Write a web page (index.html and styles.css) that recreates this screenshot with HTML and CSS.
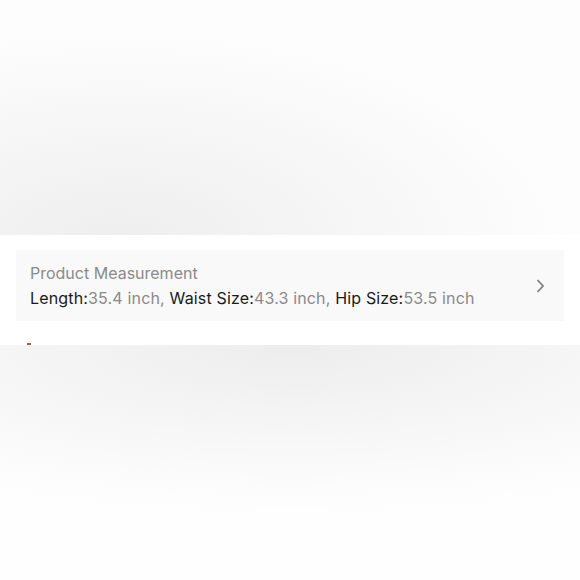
FILE: index.html
```html
<!DOCTYPE html>
<html lang="en">
<head>
    <meta charset="UTF-8">
    <meta name="viewport" content="width=device-width, initial-scale=1.0">
    <title>Product Measurement</title>
    <link rel="stylesheet" href="styles.css">
</head>
<body>
    <div class="shade-top"></div>

    <div class="section">
        <div class="measure-card">
            <div class="measure-text">
                <div class="measure-title">Product Measurement</div>
                <div class="measure-values">
                    <span class="label">Length:</span><span class="value">35.4 inch, </span><span class="label">Waist Size:</span><span class="value">43.3 inch, </span><span class="label">Hip Size:</span><span class="value">53.5 inch</span>
                </div>
            </div>
            <svg class="chevron" width="10" height="16" viewBox="0 0 10 16">
                <path d="M2.5 2 L8 8 L2.5 14" fill="none" stroke="#808080" stroke-width="1.8"/>
            </svg>
        </div>
        <div class="next-row"><span class="dot"></span></div>
    </div>

    <div class="shade-bottom"></div>
</body>
</html>
```

FILE: styles.css
```css
body {
    font-family: Inter, "Liberation Sans", Arial, sans-serif;
    margin: 0;
    padding: 0;
    background: #fff;
    width: 580px;
    height: 580px;
    overflow: hidden;
}

.shade-top {
    height: 235px;
    background: radial-gradient(ellipse 520px 250px at 120px 240px, #eeeeee 0%, #f6f6f6 45%, #fcfcfc 80%, #fdfdfd 100%);
}

.section {
    background: #fff;
    padding: 15px 16px 0;
    height: 110px;
    box-sizing: border-box;
}

.measure-card {
    display: flex;
    align-items: center;
    justify-content: space-between;
    background: #f9f9f9;
    height: 71px;
    padding: 0 19px 0 14px;
}

.measure-title {
    font-size: 16px;
    color: #8a8a8a;
    line-height: 24px;
}

.measure-values {
    font-size: 16px;
    line-height: 24px;
    margin-top: 1px;
    letter-spacing: 0.16px;
}

.label {
    color: #1a1a1a;
}

.value {
    color: #8a8a8a;
}

.chevron {
    display: block;
}

.next-row {
    height: 24px;
    position: relative;
}

.dot {
    position: absolute;
    left: 11px;
    top: 22px;
    width: 4px;
    height: 2px;
    background: #8a6a40;
}

.shade-bottom {
    height: 235px;
    background: radial-gradient(ellipse 600px 170px at 290px 0px, #ededed 0%, #f4f4f4 40%, #fbfbfb 80%, #fefefe 100%);
}
```
